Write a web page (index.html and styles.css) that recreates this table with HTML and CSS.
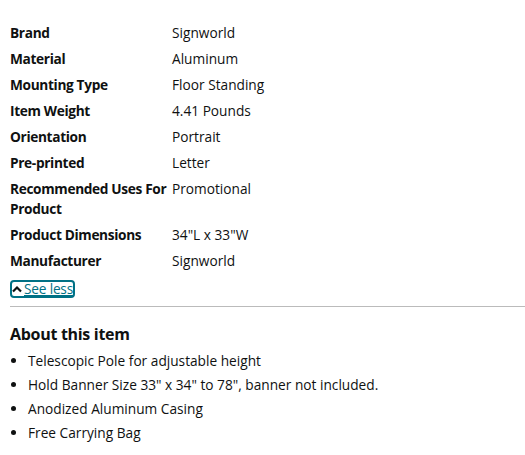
FILE: index.html
```html
<!DOCTYPE html>
<html>
<head>
<meta charset="utf-8">
<link rel="stylesheet" href="styles.css">
</head>
<body>
<div class="page">
  <table class="specs">
    <tr><th>Brand</th><td>Signworld</td></tr>
    <tr><th>Material</th><td>Aluminum</td></tr>
    <tr><th>Mounting Type</th><td>Floor Standing</td></tr>
    <tr><th>Item Weight</th><td>4.41 Pounds</td></tr>
    <tr><th>Orientation</th><td>Portrait</td></tr>
    <tr><th>Pre-printed</th><td>Letter</td></tr>
    <tr><th>Recommended Uses For Product</th><td>Promotional</td></tr>
    <tr><th>Product Dimensions</th><td>34"L x 33"W</td></tr>
    <tr><th>Manufacturer</th><td>Signworld</td></tr>
  </table>
  <a class="see-less" href="#"><svg class="chev" width="10" height="8" viewBox="0 0 10 8"><path d="M1 6.5 L5 2.5 L9 6.5" fill="none" stroke="#0F1111" stroke-width="2.2"/></svg><span>See less</span></a>
  <hr class="divider">
  <h2 class="about">About this item</h2>
  <ul class="bullets">
    <li>Telescopic Pole for adjustable height</li>
    <li>Hold Banner Size 33" x 34" to 78", banner not included.</li>
    <li>Anodized Aluminum Casing</li>
    <li>Free Carrying Bag</li>
  </ul>
</div>
</body>
</html>
```
FILE: styles.css
```css
html, body { margin: 0; padding: 0; background: #fff; }
body {
  font-family: "Open Sans", "Noto Sans", sans-serif;
  font-size: 13.7px;
  color: #0F1111;
}
.page { padding: 20px 0 0 10px; }
.specs { border-collapse: collapse; }
.specs th, .specs td {
  padding: 3px 0;
  line-height: 20px;
  vertical-align: top;
  text-align: left;
}
.specs th { font-weight: 700; width: 162px; letter-spacing: -0.35px; }
.specs td { padding-left: 0; }
.see-less {
  display: inline-flex;
  align-items: center;
  gap: 2px;
  margin-top: 6px;
  padding: 0;
  border: 2px solid #007185;
  border-radius: 4px;
  color: #007185;
  text-decoration: underline;
  line-height: 14px;
  height: 14px;
  letter-spacing: -0.2px;
}
.chev { display: block; }
.divider { border: 0; border-top: 1px solid #bbb; margin: 8px 0 0 0; }
.about { font-size: 16px; font-weight: 700; margin: 16px 0 0 0; line-height: 22px; letter-spacing: -0.3px; }
.bullets { margin: 4px 0 0 0; padding: 0 0 0 18px; }
.bullets li { line-height: 24px; }
```
